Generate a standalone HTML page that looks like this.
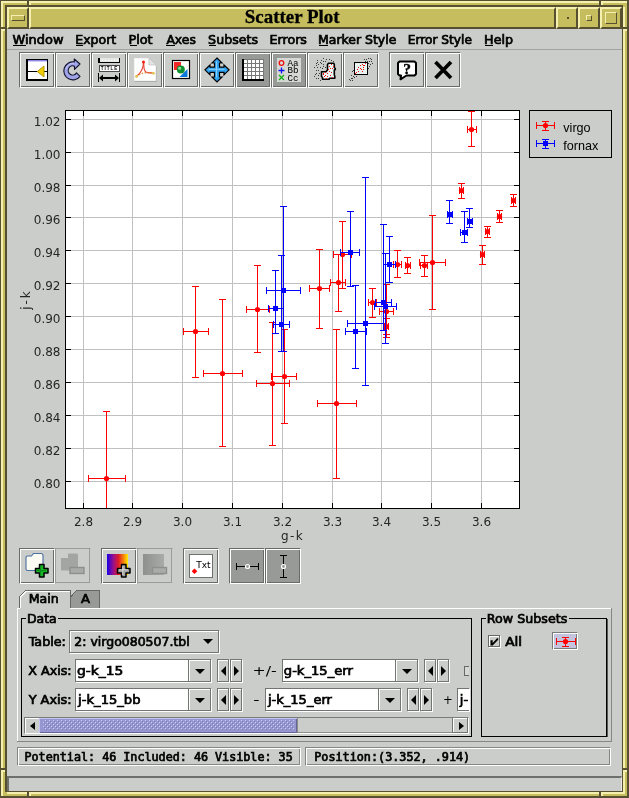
<!DOCTYPE html>
<html><head><meta charset="utf-8"><title>Scatter Plot</title>
<style>
html,body{margin:0;padding:0}
body{width:629px;height:798px;overflow:hidden;background:#cbcdca;position:relative;font-family:"DejaVu Sans","Liberation Sans",sans-serif;font-size:11px;color:#000}
.abs,.tb,.mi,.fr,.lbl,.fld,.cb,.nb{position:absolute}
svg{display:block}
svg,.tb{will-change:transform}
.fr{box-sizing:border-box}
/* motif frame pieces */
.kh{background:#c6be5e}
.raised{box-sizing:border-box;background:#c6be5e;border:2px solid;border-color:#f6f0b0 #565030 #565030 #f6f0b0}
.mi{top:33px;font-weight:bold;font-size:11.3px;line-height:14px;white-space:nowrap;letter-spacing:-0.1px}
.mi u{text-decoration:none;border-bottom:1px solid #000;padding-bottom:0}
.tb{width:36px;height:36px;box-sizing:border-box;border:1px solid #696b68;border-right-color:#fff;border-bottom-color:#fff;box-shadow:inset 1px 1px 0 #fff, inset -1px -1px 0 #696b68;}
.tb svg{position:absolute;left:-1px;top:-1px}
.tb.sel{background:#989a97}
.tb.sel::after{content:"";position:absolute;left:0;top:0;right:1px;bottom:1px;border:1px solid #fff;border-right:none;border-bottom:none;display:none}
.tb.dis{border-color:#9a9c99;box-shadow:inset -1px -1px 0 #9a9c99;border-right-color:#cbcdca;border-bottom-color:#cbcdca}
.lbl{font-weight:bold;font-size:11.3px;white-space:nowrap;line-height:14px}
.fld{box-sizing:border-box;height:23px;background:#fff;border:1px solid #737572;box-shadow:1px 1px 0 #fff;font-weight:bold;font-size:11.3px;line-height:21px;padding-left:4px;white-space:nowrap;overflow:hidden}
.cb{box-sizing:border-box;height:23px;background:#cbcdca;border:1px solid #737572;box-shadow:inset 1px 1px 0 #fff, 1px 1px 0 #fff}
.tri{position:absolute;width:0;height:0;border-left:5px solid transparent;border-right:5px solid transparent;border-top:5px solid #000}
.nb{box-sizing:border-box;height:23px;width:12px;background:#cbcdca;border:1px solid #737572;box-shadow:inset 1px 1px 0 #fff, 1px 1px 0 #fff}
.tl{position:absolute;left:3px;top:6px;width:0;height:0;border-top:5px solid transparent;border-bottom:5px solid transparent;border-right:5px solid #000}
.tr{position:absolute;left:3px;top:6px;width:0;height:0;border-top:5px solid transparent;border-bottom:5px solid transparent;border-left:5px solid #000}
.st{position:absolute;box-sizing:border-box;top:747px;height:19px;border:1px solid #858784;border-right-color:#fff;border-bottom-color:#fff;box-shadow:inset 1px 1px 0 #fff, inset -1px -1px 0 #858784;font-family:"DejaVu Sans Mono","Liberation Mono",monospace;font-weight:bold;font-size:11.63px;line-height:16px;white-space:pre;padding-left:8px;padding-top:1px}
</style></head><body>
<!-- window frame -->
<div class="abs kh" style="left:0;top:0;width:629px;height:7px"></div>
<div class="abs kh" style="left:0;top:791px;width:629px;height:7px"></div>
<div class="abs kh" style="left:0;top:0;width:7px;height:798px"></div>
<div class="abs kh" style="left:622px;top:0;width:7px;height:798px"></div>
<svg class="abs" style="left:0;top:0" width="629" height="798" shape-rendering="crispEdges">
<path d="M0.5 798V0.5H629" stroke="#565030" fill="none"/>
<path d="M2 796V2H627" stroke="#f6f0b0" stroke-width="2" fill="none"/>
<path d="M628 1V797H1" stroke="#565030" stroke-width="2" fill="none"/>
<path d="M6 791V6H622" stroke="#565030" stroke-width="2" fill="none"/>
<path d="M622.5 5V791.5H5" stroke="#565030" stroke-width="1" fill="none"/>
<path d="M624 7V793H7" stroke="#f6f0b0" stroke-width="2" fill="none"/>
<path d="M28 1V7M600 1V7M28 792V798M600 792V798M1 28H7M623 28H629M1 769H7M623 769H629" stroke="#565030" stroke-width="2"/>
<path d="M30 1V5M602 1V5M30 792V796M602 792V796M1 30H5M623 30H627M1 771H5M623 771H627" stroke="#f6f0b0" stroke-width="2"/>
</svg>
<!-- title bar -->
<div class="abs raised" style="left:7px;top:7px;width:22px;height:22px"><div class="abs raised" style="left:2px;top:6px;width:14px;height:6px;border-width:1px"></div></div>
<div class="abs raised" style="left:29px;top:7px;width:527px;height:22px"></div>
<div class="abs raised" style="left:556px;top:7px;width:22px;height:22px"><div class="abs" style="left:9px;top:8px;width:2px;height:2px;background:#565030"></div></div>
<div class="abs raised" style="left:578px;top:7px;width:22px;height:22px"><div class="abs raised" style="left:6px;top:6px;width:6px;height:6px;border-width:1px"></div></div>
<div class="abs raised" style="left:600px;top:7px;width:22px;height:22px"><div class="abs raised" style="left:3px;top:3px;width:12px;height:12px;border-width:1px"></div></div>
<!-- menu bar -->

<div class="abs" style="left:7px;top:49px;width:615px;height:1px;background:#a2a4a1"></div>
<!-- toolbar -->
<div class="tb " style="left:19px;top:52px"><svg width="36" height="36" viewBox="0 0 36 36" shape-rendering="crispEdges"><rect x="7" y="7" width="22" height="22" fill="#000"/><rect x="9" y="8" width="19" height="19" fill="#fff"/><rect x="9" y="8" width="19" height="1.4" fill="#8a86e4" shape-rendering="auto"/><rect x="9" y="19" width="19" height="1" fill="#000"/><path d="M18.3 19.5L25 14v11Z" fill="#f0d000" stroke="#b89600" stroke-width="1" shape-rendering="auto"/></svg></div><div class="tb " style="left:55px;top:52px"><svg width="36" height="36" viewBox="0 0 36 36"><path d="M19.3 10A9 9 0 1 0 25 24.3L21.5 20.9A4.5 4.6 0 1 1 19.5 14.2V17.4L25 12 19.2 7z" fill="#a0a4e6" stroke="#10102c" stroke-width="1.1" stroke-linejoin="round"/><path d="M19 11.2A7.8 7.8 0 0 0 11 17" fill="none" stroke="#c4c8f6" stroke-width="1"/></svg></div><div class="tb " style="left:91px;top:52px"><svg width="36" height="36" viewBox="0 0 36 36"><g shape-rendering="crispEdges"><rect x="9" y="6" width="19" height="4" fill="#e6e8e5"/><rect x="7" y="6" width="2" height="5" fill="#000"/><rect x="7" y="9.5" width="22" height="1.5" fill="#000"/><rect x="28" y="6" width="1" height="5" fill="#000"/><path d="M11.5 8v2M14.5 8v2M17.5 8v2M20.5 8v2M23.5 8v2M26.5 8v2" stroke="#fff" stroke-width="1" stroke-dasharray="1 1"/><rect x="8.5" y="13.5" width="20" height="6" fill="#fff" stroke="#4a4a4a"/><path d="M7.5 21v9M28.5 21v9" stroke="#000" stroke-width="1"/><rect x="10" y="25" width="16" height="2" fill="#000"/></g><text x="18.5" y="18.4" font-family="'Liberation Sans','DejaVu Sans',sans-serif" font-weight="bold" font-size="4.6" fill="#000" text-anchor="middle" letter-spacing="0.9">TITLE</text><path d="M8 26l4-3.5v7zM28 26l-4-3.5v7z" fill="#000"/></svg></div><div class="tb " style="left:127px;top:52px"><svg width="36" height="36" viewBox="0 0 36 36"><path d="M7.5 7h15l7 7v16h-22z" fill="#9c9e9b"/><path d="M7 6h15l7 7v16H7z" fill="#fff" stroke="#d4d4d4" stroke-width="0.6"/><path d="M22 6v7h7z" fill="#e4e4e4" stroke="#bdbdbd" stroke-width="0.7"/><path d="M16.5 10c.8 4-.5 8 2.5 10 2.3 1.2 5 .7 7.5 1.3" fill="none" stroke="#e44030" stroke-width="1.15"/><path d="M16.5 10c0 5-2 10.5-7 14.5" fill="none" stroke="#e44030" stroke-width="1.15"/><path d="M9.5 24.5c4-3.5 9-4.5 17-3.2" fill="none" stroke="#e88a30" stroke-width="1.2" stroke-dasharray="1.5 1.5"/><circle cx="16.5" cy="10" r="1.5" fill="#f02010"/><circle cx="9.5" cy="24.5" r="1.4" fill="#e0c850"/><circle cx="26.5" cy="21.3" r="1.4" fill="#e0c850"/></svg></div><div class="tb " style="left:163px;top:52px"><svg width="36" height="36" viewBox="0 0 36 36"><rect x="9.5" y="8.5" width="17" height="18" fill="#fff" stroke="#000" stroke-width="1.2"/><rect x="11" y="10" width="7" height="8" fill="#f02828"/><path d="M24.5 17v8h-8z" fill="#0a78d8"/><circle cx="17.8" cy="17.5" r="4" fill="#109030"/><circle cx="16.6" cy="16.2" r="1.5" fill="#8fe0a0"/></svg></div><div class="tb " style="left:199px;top:52px"><svg width="36" height="36" viewBox="0 0 36 36"><path d="M18 6l5 5h-2.5v4.2H25V13l5 4.8-5 5v-2.5h-4.5V25H23l-5 5-5-5h2.5v-4.7H11v2.5l-5-5L11 13v2.2h4.5V11H13z" fill="#30a4f2" stroke="#000" stroke-width="1.2" stroke-linejoin="miter"/><path d="M17.5 9.5v16M9.5 17.3h16" stroke="#8cd0fa" stroke-width="1"/></svg></div><div class="tb sel" style="left:235px;top:52px"><svg width="36" height="36" viewBox="0 0 36 36" shape-rendering="crispEdges"><rect x="7" y="7" width="22" height="22" fill="#787878"/><rect x="7" y="7" width="2" height="22" fill="#000"/><rect x="7" y="27" width="22" height="2" fill="#000"/><rect x="9" y="8" width="3" height="3" fill="#fff"/><rect x="9" y="12" width="3" height="3" fill="#fff"/><rect x="9" y="16" width="3" height="3" fill="#fff"/><rect x="9" y="20" width="3" height="3" fill="#fff"/><rect x="9" y="24" width="3" height="3" fill="#fff"/><rect x="13" y="8" width="3" height="3" fill="#fff"/><rect x="13" y="12" width="3" height="3" fill="#fff"/><rect x="13" y="16" width="3" height="3" fill="#fff"/><rect x="13" y="20" width="3" height="3" fill="#fff"/><rect x="13" y="24" width="3" height="3" fill="#fff"/><rect x="17" y="8" width="3" height="3" fill="#fff"/><rect x="17" y="12" width="3" height="3" fill="#fff"/><rect x="17" y="16" width="3" height="3" fill="#fff"/><rect x="17" y="20" width="3" height="3" fill="#fff"/><rect x="17" y="24" width="3" height="3" fill="#fff"/><rect x="21" y="8" width="3" height="3" fill="#fff"/><rect x="21" y="12" width="3" height="3" fill="#fff"/><rect x="21" y="16" width="3" height="3" fill="#fff"/><rect x="21" y="20" width="3" height="3" fill="#fff"/><rect x="21" y="24" width="3" height="3" fill="#fff"/><rect x="25" y="8" width="3" height="3" fill="#fff"/><rect x="25" y="12" width="3" height="3" fill="#fff"/><rect x="25" y="16" width="3" height="3" fill="#fff"/><rect x="25" y="20" width="3" height="3" fill="#fff"/><rect x="25" y="24" width="3" height="3" fill="#fff"/></svg></div><div class="tb sel" style="left:271px;top:52px"><svg width="36" height="36" viewBox="0 0 36 36"><rect x="6" y="6" width="24" height="24" fill="#d6d8d5"/><circle cx="10.5" cy="11" r="2.3" fill="none" stroke="#f01010" stroke-width="1.3"/><path d="M10.5 15.5v6M7.5 18.5h6" stroke="#1010f0" stroke-width="1.3"/><path d="M8 23l5 5M13 23l-5 5" stroke="#10b010" stroke-width="1.2"/><g font-family="'Liberation Mono','DejaVu Sans Mono',monospace" font-size="9" fill="#000"><text x="16.5" y="14" textLength="11" lengthAdjust="spacingAndGlyphs">Aa</text><text x="16.5" y="21.3" textLength="11" lengthAdjust="spacingAndGlyphs">Bb</text><text x="16.5" y="28.6" textLength="11" lengthAdjust="spacingAndGlyphs">Cc</text></g></svg></div><div class="tb " style="left:307px;top:52px"><svg width="36" height="36" viewBox="0 0 36 36" shape-rendering="crispEdges"><rect x="16" y="6" width="1" height="1" fill="#3a3a3a"/><rect x="19" y="7" width="1" height="1" fill="#3a3a3a"/><rect x="22" y="7" width="1" height="1" fill="#3a3a3a"/><rect x="24" y="8" width="1" height="1" fill="#3a3a3a"/><rect x="26" y="9" width="1" height="1" fill="#3a3a3a"/><rect x="10" y="8" width="1" height="1" fill="#3a3a3a"/><rect x="14" y="8" width="1" height="1" fill="#3a3a3a"/><rect x="16" y="9" width="1" height="1" fill="#3a3a3a"/><rect x="18" y="9" width="1" height="1" fill="#3a3a3a"/><rect x="10" y="10" width="1" height="1" fill="#3a3a3a"/><rect x="13" y="10" width="1" height="1" fill="#3a3a3a"/><rect x="9" y="11" width="1" height="1" fill="#3a3a3a"/><rect x="11" y="12" width="1" height="1" fill="#3a3a3a"/><rect x="14" y="11" width="1" height="1" fill="#3a3a3a"/><rect x="16" y="12" width="1" height="1" fill="#3a3a3a"/><rect x="9" y="13" width="1" height="1" fill="#3a3a3a"/><rect x="7" y="15" width="1" height="1" fill="#3a3a3a"/><rect x="10" y="15" width="1" height="1" fill="#3a3a3a"/><rect x="13" y="15" width="1" height="1" fill="#3a3a3a"/><rect x="16" y="14" width="1" height="1" fill="#3a3a3a"/><rect x="18" y="15" width="1" height="1" fill="#3a3a3a"/><rect x="15" y="16" width="1" height="1" fill="#3a3a3a"/><rect x="9" y="18" width="1" height="1" fill="#3a3a3a"/><rect x="11" y="18" width="1" height="1" fill="#3a3a3a"/><rect x="9" y="21" width="1" height="1" fill="#3a3a3a"/><rect x="8" y="22" width="1" height="1" fill="#3a3a3a"/><rect x="12" y="21" width="1" height="1" fill="#3a3a3a"/><rect x="11" y="23" width="1" height="1" fill="#3a3a3a"/><rect x="7" y="24" width="1" height="1" fill="#3a3a3a"/><rect x="9" y="26" width="1" height="1" fill="#3a3a3a"/><rect x="11" y="26" width="1" height="1" fill="#3a3a3a"/><rect x="13" y="28" width="1" height="1" fill="#3a3a3a"/><path d="M20.5 12.5l1-1.2h5l.8 1v3.2l1 1v1l-1 .5v5l.5 1v2.3h-5.3l-.5 1h-6.5v-1.8l-1-1v-4.7h4.5l1.5-1.8z" fill="#eaf6f4" stroke="#000" stroke-width="1.6" stroke-linejoin="round" shape-rendering="auto"/><rect x="24" y="12" width="1" height="1" fill="#f01010"/><rect x="22" y="14" width="1" height="1" fill="#f01010"/><rect x="26" y="14" width="1" height="1" fill="#f01010"/><rect x="23" y="16" width="1" height="1" fill="#f01010"/><rect x="25" y="16" width="1" height="1" fill="#f01010"/><rect x="21" y="17" width="1" height="1" fill="#f01010"/><rect x="22" y="19" width="1" height="1" fill="#f01010"/><rect x="24" y="20" width="1" height="1" fill="#f01010"/><rect x="18" y="20" width="1" height="1" fill="#f01010"/><rect x="20" y="21" width="1" height="1" fill="#f01010"/><rect x="16" y="21" width="1" height="1" fill="#f01010"/><rect x="16" y="22" width="1" height="1" fill="#f01010"/><rect x="18" y="23" width="1" height="1" fill="#f01010"/><rect x="23" y="23" width="1" height="1" fill="#f01010"/><rect x="17" y="24" width="1" height="1" fill="#f01010"/><rect x="20" y="24" width="1" height="1" fill="#f01010"/><rect x="25" y="25" width="1" height="1" fill="#f01010"/><rect x="19" y="26" width="1" height="1" fill="#f01010"/></svg></div><div class="tb " style="left:343px;top:52px"><svg width="36" height="36" viewBox="0 0 36 36" shape-rendering="crispEdges"><rect x="21" y="7" width="1" height="1" fill="#3a3a3a"/><rect x="23" y="7" width="1" height="1" fill="#3a3a3a"/><rect x="25" y="6" width="1" height="1" fill="#3a3a3a"/><rect x="27" y="6" width="1" height="1" fill="#3a3a3a"/><rect x="28" y="7" width="1" height="1" fill="#3a3a3a"/><rect x="22" y="9" width="1" height="1" fill="#3a3a3a"/><rect x="24" y="9" width="1" height="1" fill="#3a3a3a"/><rect x="26" y="9" width="1" height="1" fill="#3a3a3a"/><rect x="28" y="9" width="1" height="1" fill="#3a3a3a"/><rect x="29" y="11" width="1" height="1" fill="#3a3a3a"/><rect x="27" y="12" width="1" height="1" fill="#3a3a3a"/><rect x="25" y="11" width="1" height="1" fill="#3a3a3a"/><rect x="26" y="14" width="1" height="1" fill="#3a3a3a"/><rect x="25" y="16" width="1" height="1" fill="#3a3a3a"/><rect x="10" y="18" width="1" height="1" fill="#3a3a3a"/><rect x="9" y="19" width="1" height="1" fill="#3a3a3a"/><rect x="8" y="23" width="1" height="1" fill="#3a3a3a"/><rect x="10" y="24" width="1" height="1" fill="#3a3a3a"/><rect x="13" y="24" width="1" height="1" fill="#3a3a3a"/><rect x="11" y="25" width="1" height="1" fill="#3a3a3a"/><rect x="8" y="26" width="1" height="1" fill="#3a3a3a"/><rect x="9" y="26" width="1" height="1" fill="#3a3a3a"/><rect x="6" y="27" width="1" height="1" fill="#3a3a3a"/><rect x="7" y="28" width="1" height="1" fill="#3a3a3a"/><rect x="9" y="28" width="1" height="1" fill="#3a3a3a"/><rect x="11" y="10" width="14" height="13" fill="#000"/><rect x="12" y="11" width="12" height="11" fill="#e4f2f0"/><rect x="13" y="12" width="1" height="1" fill="#fff"/><rect x="15" y="12" width="1" height="1" fill="#fff"/><rect x="17" y="12" width="1" height="1" fill="#fff"/><rect x="19" y="12" width="1" height="1" fill="#fff"/><rect x="21" y="12" width="1" height="1" fill="#fff"/><rect x="23" y="12" width="1" height="1" fill="#fff"/><rect x="13" y="21" width="1" height="1" fill="#fff"/><rect x="15" y="21" width="1" height="1" fill="#fff"/><rect x="17" y="21" width="1" height="1" fill="#fff"/><rect x="19" y="21" width="1" height="1" fill="#fff"/><rect x="21" y="21" width="1" height="1" fill="#fff"/><rect x="23" y="21" width="1" height="1" fill="#fff"/><rect x="12" y="13" width="1" height="1" fill="#fff"/><rect x="12" y="15" width="1" height="1" fill="#fff"/><rect x="12" y="17" width="1" height="1" fill="#fff"/><rect x="12" y="19" width="1" height="1" fill="#fff"/><rect x="23" y="13" width="1" height="1" fill="#fff"/><rect x="23" y="15" width="1" height="1" fill="#fff"/><rect x="23" y="17" width="1" height="1" fill="#fff"/><rect x="23" y="19" width="1" height="1" fill="#fff"/><rect x="22" y="11" width="1" height="1" fill="#f01010"/><rect x="19" y="12" width="1" height="1" fill="#f01010"/><rect x="17" y="13" width="1" height="1" fill="#f01010"/><rect x="20" y="13" width="1" height="1" fill="#f01010"/><rect x="21" y="13" width="1" height="1" fill="#f01010"/><rect x="15" y="15" width="1" height="1" fill="#f01010"/><rect x="20" y="15" width="1" height="1" fill="#f01010"/><rect x="17" y="16" width="1" height="1" fill="#f01010"/><rect x="14" y="17" width="1" height="1" fill="#f01010"/><rect x="18" y="17" width="1" height="1" fill="#f01010"/><rect x="20" y="17" width="1" height="1" fill="#f01010"/><rect x="15" y="19" width="1" height="1" fill="#f01010"/><rect x="19" y="19" width="1" height="1" fill="#f01010"/><rect x="13" y="20" width="1" height="1" fill="#f01010"/><rect x="12" y="21" width="1" height="1" fill="#f01010"/></svg></div><div class="tb " style="left:389px;top:52px"><svg width="36" height="36" viewBox="0 0 36 36"><path d="M10.5 9.5h15l1.5 1.5v11l-1.5 1.5h-8l-6 3.8.5-3.8h-1.5l-1.5-1.5v-11z" fill="#fff" stroke="#000" stroke-width="2" stroke-linejoin="round"/><text x="18" y="21.5" font-family="'Liberation Serif','DejaVu Serif',serif" font-weight="bold" font-size="15.5" text-anchor="middle" fill="#000" stroke="#000" stroke-width="0.4">?</text></svg></div><div class="tb " style="left:425px;top:52px"><svg width="36" height="36" viewBox="0 0 36 36"><path d="M10.5 10l15.5 16M26 10l-15.5 16" stroke="#000" stroke-width="3.7"/></svg></div>
<svg class="abs" style="left:0;top:95px" width="629" height="450" viewBox="0 95 629 450">
<rect x="65.5" y="110.5" width="454" height="398" fill="#fff" stroke="#000" stroke-width="1" shape-rendering="crispEdges"/>
<path d="M83.5 111V508M132.5 111V508M182.5 111V508M232.5 111V508M282.5 111V508M332.5 111V508M381.5 111V508M431.5 111V508M481.5 111V508M66 119.5H519M66 152.5H519M66 185.5H519M66 217.5H519M66 250.5H519M66 283.5H519M66 316.5H519M66 349.5H519M66 382.5H519M66 415.5H519M66 448.5H519M66 481.5H519" stroke="#c0c0c0" stroke-width="1" shape-rendering="crispEdges"/>
<path d="M83.5 111V116M83.5 503V508M132.5 111V116M132.5 503V508M182.5 111V116M182.5 503V508M232.5 111V116M232.5 503V508M282.5 111V116M282.5 503V508M332.5 111V116M332.5 503V508M381.5 111V116M381.5 503V508M431.5 111V116M431.5 503V508M481.5 111V116M481.5 503V508M66 119.5H71M514 119.5H519M66 152.5H71M514 152.5H519M66 185.5H71M514 185.5H519M66 217.5H71M514 217.5H519M66 250.5H71M514 250.5H519M66 283.5H71M514 283.5H519M66 316.5H71M514 316.5H519M66 349.5H71M514 349.5H519M66 382.5H71M514 382.5H519M66 415.5H71M514 415.5H519M66 448.5H71M514 448.5H519M66 481.5H71M514 481.5H519" stroke="#000" stroke-width="1" shape-rendering="crispEdges"/>
<clipPath id="pc"><rect x="66" y="111" width="453" height="397"/></clipPath>
<g clip-path="url(#pc)">
<path d="M88.5 478.5H125.5M88.5 475V482M125.5 475V482M106.5 411.5V520.5M103 411.5H110M103 520.5H110M183.5 331.5H208.5M183.5 328V335M208.5 328V335M195.5 286.5V377.5M192 286.5H199M192 377.5H199M203.5 373.5H242.5M203.5 370V377M242.5 370V377M222.5 299.5V446.5M219 299.5H226M219 446.5H226M246.5 309.5H269.5M246.5 306V313M269.5 306V313M257.5 265.5V352.5M254 265.5H261M254 352.5H261M256.5 383.5H289.5M256.5 380V387M289.5 380V387M272.5 322.5V445.5M269 322.5H276M269 445.5H276M271.5 376.5H296.5M271.5 373V380M296.5 373V380M284.5 329.5V423.5M281 329.5H288M281 423.5H288M309.5 288.5H329.5M309.5 285V292M329.5 285V292M319.5 249.5V328.5M316 249.5H323M316 328.5H323M317.5 403.5H356.5M317.5 400V407M356.5 400V407M336.5 329.5V478.5M333 329.5H340M333 478.5H340M330.5 282.5H345.5M330.5 279V286M345.5 279V286M338.5 254.5V311.5M335 254.5H342M335 311.5H342M333.5 254.5H351.5M333.5 251V258M351.5 251V258M342.5 221.5V288.5M339 221.5H346M339 288.5H346M368.5 302.5H376.5M368.5 299V306M376.5 299V306M372.5 288.5V317.5M369 288.5H376M369 317.5H376M379.5 311.5H393.5M379.5 308V315M393.5 308V315M386.5 284.5V337.5M383 284.5H390M383 337.5H390M384.5 326.5H388.5M384.5 323V330M388.5 323V330M386.5 318.5V334.5M383 318.5H390M383 334.5H390M393.5 264.5H401.5M393.5 261V268M401.5 261V268M397.5 250.5V277.5M394 250.5H401M394 277.5H401M405.5 265.5H410.5M405.5 262V269M410.5 262V269M407.5 257.5V273.5M404 257.5H411M404 273.5H411M420.5 265.5H427.5M420.5 262V269M427.5 262V269M424.5 255.5V276.5M421 255.5H428M421 276.5H428M419.5 262.5H445.5M419.5 259V266M445.5 259V266M432.5 215.5V309.5M429 215.5H436M429 309.5H436M459.5 190.5H463.5M459.5 187V194M463.5 187V194M461.5 183.5V198.5M458 183.5H465M458 198.5H465M467.5 129.5H476.5M467.5 126V133M476.5 126V133M471.5 111.5V146.5M468 111.5H475M468 146.5H475M480.5 254.5H484.5M480.5 251V258M484.5 251V258M482.5 245.5V264.5M479 245.5H486M479 264.5H486M485.5 231.5H489.5M485.5 228V235M489.5 228V235M487.5 226.5V237.5M484 226.5H491M484 237.5H491M497.5 216.5H501.5M497.5 213V220M501.5 213V220M499.5 210.5V222.5M496 210.5H503M496 222.5H503M511.5 200.5H515.5M511.5 197V204M515.5 197V204M513.5 194.5V206.5M510 194.5H517M510 206.5H517" stroke="#ff0000" stroke-width="1" fill="none" shape-rendering="crispEdges"/>
<circle cx="106.5" cy="478.5" r="2.6" fill="#ff0000"/>
<circle cx="195.5" cy="331.5" r="2.6" fill="#ff0000"/>
<circle cx="222.5" cy="373.5" r="2.6" fill="#ff0000"/>
<circle cx="257.5" cy="309.5" r="2.6" fill="#ff0000"/>
<circle cx="272.5" cy="383.5" r="2.6" fill="#ff0000"/>
<circle cx="284.5" cy="376.5" r="2.6" fill="#ff0000"/>
<circle cx="319.5" cy="288.5" r="2.6" fill="#ff0000"/>
<circle cx="336.5" cy="403.5" r="2.6" fill="#ff0000"/>
<circle cx="338.5" cy="282.5" r="2.6" fill="#ff0000"/>
<circle cx="342.5" cy="254.5" r="2.6" fill="#ff0000"/>
<circle cx="372.5" cy="302.5" r="2.6" fill="#ff0000"/>
<circle cx="386.5" cy="311.5" r="2.6" fill="#ff0000"/>
<circle cx="386.5" cy="326.5" r="2.6" fill="#ff0000"/>
<circle cx="397.5" cy="264.5" r="2.6" fill="#ff0000"/>
<circle cx="407.5" cy="265.5" r="2.6" fill="#ff0000"/>
<circle cx="424.5" cy="265.5" r="2.6" fill="#ff0000"/>
<circle cx="432.5" cy="262.5" r="2.6" fill="#ff0000"/>
<circle cx="461.5" cy="190.5" r="2.6" fill="#ff0000"/>
<circle cx="471.5" cy="129.5" r="2.6" fill="#ff0000"/>
<circle cx="482.5" cy="254.5" r="2.6" fill="#ff0000"/>
<circle cx="487.5" cy="231.5" r="2.6" fill="#ff0000"/>
<circle cx="499.5" cy="216.5" r="2.6" fill="#ff0000"/>
<circle cx="513.5" cy="200.5" r="2.6" fill="#ff0000"/>
<path d="M268.5 308.5H283.5M268.5 305V312M283.5 305V312M275.5 270.5V333.5M272 270.5H279M272 333.5H279M273.5 324.5H289.5M273.5 321V328M289.5 321V328M281.5 255.5V351.5M278 255.5H285M278 351.5H285M266.5 290.5H300.5M266.5 287V294M300.5 287V294M283.5 206.5V351.5M280 206.5H287M280 351.5H287M340.5 252.5H359.5M340.5 249V256M359.5 249V256M350.5 211.5V286.5M347 211.5H354M347 286.5H354M345.5 331.5H366.5M345.5 328V335M366.5 328V335M355.5 285.5V368.5M352 285.5H359M352 368.5H359M347.5 323.5H383.5M347.5 320V327M383.5 320V327M365.5 177.5V385.5M362 177.5H369M362 385.5H369M375.5 302.5H391.5M375.5 299V306M391.5 299V306M383.5 224.5V330.5M380 224.5H387M380 330.5H387M374.5 306.5H396.5M374.5 303V310M396.5 303V310M385.5 253.5V343.5M382 253.5H389M382 343.5H389M383.5 264.5H395.5M383.5 261V268M395.5 261V268M389.5 236.5V282.5M386 236.5H393M386 282.5H393M447.5 214.5H452.5M447.5 211V218M452.5 211V218M449.5 200.5V223.5M446 200.5H453M446 223.5H453M460.5 232.5H467.5M460.5 229V236M467.5 229V236M464.5 211.5V242.5M461 211.5H468M461 242.5H468M467.5 221.5H472.5M467.5 218V225M472.5 218V225M469.5 208.5V227.5M466 208.5H473M466 227.5H473" stroke="#0000ff" stroke-width="1" fill="none" shape-rendering="crispEdges"/>
<rect x="273" y="306" width="5" height="5" fill="#0000ff"/>
<rect x="279" y="322" width="5" height="5" fill="#0000ff"/>
<rect x="281" y="288" width="5" height="5" fill="#0000ff"/>
<rect x="348" y="250" width="5" height="5" fill="#0000ff"/>
<rect x="353" y="329" width="5" height="5" fill="#0000ff"/>
<rect x="363" y="321" width="5" height="5" fill="#0000ff"/>
<rect x="381" y="300" width="5" height="5" fill="#0000ff"/>
<rect x="383" y="304" width="5" height="5" fill="#0000ff"/>
<rect x="387" y="262" width="5" height="5" fill="#0000ff"/>
<rect x="447" y="212" width="5" height="5" fill="#0000ff"/>
<rect x="462" y="230" width="5" height="5" fill="#0000ff"/>
<rect x="467" y="219" width="5" height="5" fill="#0000ff"/>
</g>
<g font-family="'DejaVu Sans','Liberation Sans',sans-serif" font-size="12" fill="#262626">
<text x="60.5" y="126" text-anchor="end">1.02</text>
<text x="60.5" y="159" text-anchor="end">1.00</text>
<text x="60.5" y="192" text-anchor="end">0.98</text>
<text x="60.5" y="224" text-anchor="end">0.96</text>
<text x="60.5" y="257" text-anchor="end">0.94</text>
<text x="60.5" y="290" text-anchor="end">0.92</text>
<text x="60.5" y="323" text-anchor="end">0.90</text>
<text x="60.5" y="356" text-anchor="end">0.88</text>
<text x="60.5" y="389" text-anchor="end">0.86</text>
<text x="60.5" y="422" text-anchor="end">0.84</text>
<text x="60.5" y="455" text-anchor="end">0.82</text>
<text x="60.5" y="488" text-anchor="end">0.80</text>
<text x="83.5" y="526" text-anchor="middle">2.8</text>
<text x="132.5" y="526" text-anchor="middle">2.9</text>
<text x="182.5" y="526" text-anchor="middle">3.0</text>
<text x="232.5" y="526" text-anchor="middle">3.1</text>
<text x="282.5" y="526" text-anchor="middle">3.2</text>
<text x="332.5" y="526" text-anchor="middle">3.3</text>
<text x="381.5" y="526" text-anchor="middle">3.4</text>
<text x="431.5" y="526" text-anchor="middle">3.5</text>
<text x="481.5" y="526" text-anchor="middle">3.6</text>
<text x="281" y="540" letter-spacing="1.4">g-k</text>
<text transform="translate(29.5,309.8) rotate(-90)" letter-spacing="2">j-k</text>
</g>
<rect x="529.5" y="110.5" width="82" height="47" fill="none" stroke="#000" shape-rendering="crispEdges"/>
<path d="M536.5 125.5H554.5M536.5 122V129M554.5 122V129M545.5 121.5V130.5M542 121.5H549M542 130.5H549" stroke="#f00" shape-rendering="crispEdges"/><circle cx="545.5" cy="125.5" r="2.6" fill="#f00"/>
<path d="M536.5 143.5H554.5M536.5 140V147M554.5 140V147M545.5 139.5V148.5M542 139.5H549M542 148.5H549" stroke="#00f" shape-rendering="crispEdges"/><rect x="543" y="141" width="5" height="5" fill="#00f"/>
<g font-family="'Liberation Sans','DejaVu Sans',sans-serif" font-size="12.6" fill="#000"><text x="563.3" y="131.5">virgo</text><text x="563.3" y="149.5">fornax</text></g>
</svg>
<div class="tb " style="left:19px;top:548px"><svg width="36" height="36" viewBox="0 0 36 36"><path d="M7 9.5q0-1.5 1.5-1.5h4l2-2.5h7.5q2 0 2 2v13.5q0 1.5-1.5 1.5h-14q-1.5 0-1.5-1.5z" fill="#fbfbf3" stroke="#4a70a0" stroke-width="1.1"/><path d="M20.5 16.5h4.5v4h4v4.5h-4v4h-4.5v-4h-4v-4.5h4z" fill="#18b828" stroke="#000" stroke-width="1.5" stroke-linejoin="round"/><path d="M21.5 18v9M18 22.7h9" stroke="#0c8c18" stroke-width="1.2"/></svg></div><div class="tb dis" style="left:55px;top:548px"><svg width="36" height="36" viewBox="0 0 36 36"><path d="M6 10h7v-3.5q0-1 1-1h7.5q1.5 0 1.5 1.5v15.5h-17z" fill="#a3a5a2"/><rect x="15" y="19.5" width="14" height="6" fill="#a9aba8" stroke="#8e908d" stroke-width="1.4"/></svg></div><div class="tb " style="left:101px;top:548px"><svg width="36" height="36" viewBox="0 0 36 36"><defs><linearGradient id="ag" x1="0" x2="1" y1="0" y2="0"><stop offset="0" stop-color="#1a00e8"/><stop offset="0.3" stop-color="#98108c"/><stop offset="0.55" stop-color="#e01c28"/><stop offset="0.8" stop-color="#f88a08"/><stop offset="1" stop-color="#ffee00"/></linearGradient></defs><rect x="6" y="6" width="21" height="21" fill="url(#ag)"/><path d="M20.5 16.5h4.5v4h4v4.5h-4v4h-4.5v-4h-4v-4.5h4z" fill="#a4a6a3" stroke="#000" stroke-width="1.5" stroke-linejoin="round"/><path d="M21.8 18v9M18 21.8h9" stroke="#d8d8d8" stroke-width="1"/></svg></div><div class="tb dis" style="left:137px;top:548px"><svg width="36" height="36" viewBox="0 0 36 36"><defs><linearGradient id="gg" x1="0" x2="1" y1="0" y2="0"><stop offset="0" stop-color="#8e908d"/><stop offset="1" stop-color="#a9aba8"/></linearGradient></defs><rect x="6" y="6" width="21" height="21" fill="url(#gg)"/><rect x="15.5" y="19.5" width="14" height="6" fill="#a9aba8" stroke="#8e908d" stroke-width="1.4"/></svg></div><div class="tb " style="left:183px;top:548px"><svg width="36" height="36" viewBox="0 0 36 36"><rect x="6.5" y="6.5" width="23" height="23" fill="#fff" stroke="#6e706d" stroke-width="1"/><text x="13.2" y="19.8" font-family="'DejaVu Sans','Liberation Sans',sans-serif" font-size="9.2" fill="#000" textLength="14.4" lengthAdjust="spacingAndGlyphs">Txt</text><path d="M11.5 20.5l2.8 2.8-2.8 2.8-2.8-2.8z" fill="#f00"/></svg></div><div class="tb sel" style="left:229px;top:548px"><svg width="36" height="36" viewBox="0 0 36 36"><path d="M7.5 18.5h22M7.5 15v7M29.5 15v7" stroke="#000" stroke-width="1" shape-rendering="crispEdges"/><circle cx="18.5" cy="18.5" r="2" fill="#989a97" stroke="#fff" stroke-width="1.2"/></svg></div><div class="tb sel" style="left:265px;top:548px"><svg width="36" height="36" viewBox="0 0 36 36"><path d="M18.5 7.5v22M15 7.5h7M15 29.5h7" stroke="#000" stroke-width="1" shape-rendering="crispEdges"/><circle cx="18.5" cy="18.5" r="2" fill="#989a97" stroke="#fff" stroke-width="1.2"/></svg></div>
<!-- tabbed pane -->
<svg class="abs" style="left:0;top:585px" width="629" height="160" viewBox="0 585 629 160" shape-rendering="crispEdges">
<path d="M71 608V596.5L76.5 591H99.5V608Z" fill="#989a97"/>
<path d="M19.5 608V596.5L25.5 590.5H70.5V608" fill="none" stroke="#666866"/>
<path d="M20.5 608V597L26 591.5H70" fill="none" stroke="#fff"/>
<path d="M71 596.5L76.5 590.5H99.5V608" fill="none" stroke="#666866"/>
<path d="M17 608.5H20M70 608.5H611M17.5 608V741" fill="none" stroke="#fff"/>
<path d="M17 741.5H612M611.5 608V742" fill="none" stroke="#858784"/>
<!-- Data titled border -->
<path d="M26 618.5H21.5V736.5H471.5V618.5H58" fill="none" stroke="#000"/>
<!-- Row Subsets titled border -->
<path d="M486 618.5H481.5V736.5H606.5V618.5H569" fill="none" stroke="#000"/>
<path d="M607.5 619V737" fill="none" stroke="#555"/>
</svg>
<!-- Table row -->
<div class="cb" style="left:69px;top:630px;width:150px"><div class="tri" style="left:133px;top:8px"></div></div>
<!-- X row -->
<div class="fld" style="left:75px;top:659px;width:114px"></div>
<div class="cb" style="left:188px;top:659px;width:23px"><div class="tri" style="left:6px;top:9px"></div></div>
<div class="nb" style="left:217px;top:659px"><div class="tl"></div></div>
<div class="nb" style="left:230px;top:659px"><div class="tr"></div></div>
<div class="fld" style="left:282px;top:659px;width:114px"></div>
<div class="cb" style="left:395px;top:659px;width:23px"><div class="tri" style="left:6px;top:9px"></div></div>
<div class="nb" style="left:424px;top:659px"><div class="tl"></div></div>
<div class="nb" style="left:437px;top:659px"><div class="tr"></div></div>
<div class="abs" style="left:464px;top:666px;width:5px;height:10px;box-sizing:border-box;border:1px solid #666866;border-right:none;background:#d6d8d5"></div>
<!-- Y row -->
<div class="fld" style="left:75px;top:688px;width:114px"></div>
<div class="cb" style="left:188px;top:688px;width:23px"><div class="tri" style="left:6px;top:9px"></div></div>
<div class="nb" style="left:217px;top:688px"><div class="tl"></div></div>
<div class="nb" style="left:230px;top:688px"><div class="tr"></div></div>
<div class="fld" style="left:265px;top:688px;width:114px"></div>
<div class="cb" style="left:378px;top:688px;width:23px"><div class="tri" style="left:6px;top:9px"></div></div>
<div class="nb" style="left:407px;top:688px"><div class="tl"></div></div>
<div class="nb" style="left:420px;top:688px"><div class="tr"></div></div>
<div class="fld" style="left:457px;top:688px;width:12px;border-right:none;padding-left:3px"></div>
<!-- scrollbar -->
<div class="abs" style="left:24px;top:717px;width:445px;height:17px;box-sizing:border-box;border:1px solid #7a7c79;border-right-color:#fff;border-bottom-color:#fff;background:#cbcdca"></div>
<div class="abs" style="left:25px;top:718px;width:14px;height:15px;box-sizing:border-box;border:1px solid #fff;border-right:none;border-bottom:none"><div class="tl" style="left:4px;top:3px;border-top-width:4px;border-bottom-width:4px;border-right-width:5px"></div></div>
<div class="abs" style="left:452px;top:718px;width:16px;height:15px;box-sizing:border-box;border:1px solid #737572;border-top:none;box-shadow:inset 1px 1px 0 #fff"><div class="tr" style="left:6px;top:4px;border-top-width:4px;border-bottom-width:4px;border-left-width:5px"></div></div>
<svg class="abs" style="left:39px;top:718px" width="258" height="15"><defs><pattern id="dp" width="4" height="4" patternUnits="userSpaceOnUse"><rect width="4" height="4" fill="#9696d0"/><rect x="0" y="0" width="1" height="1" fill="#cfcfff"/><rect x="2" y="2" width="1" height="1" fill="#cfcfff"/><rect x="1" y="1" width="1" height="1" fill="#7c7cb0"/><rect x="3" y="3" width="1" height="1" fill="#7c7cb0"/></pattern></defs><rect width="258" height="15" fill="#9696d0"/><rect x="4" y="2" width="251" height="10" fill="url(#dp)"/><path d="M0.5 15V0.5H258" stroke="#c4c4f4" fill="none" shape-rendering="crispEdges"/><path d="M257.5 1V14.5H1" stroke="#666699" fill="none" shape-rendering="crispEdges"/></svg>
<div class="abs" style="left:297px;top:718px;width:155px;height:15px;box-sizing:border-box;border-left:1px solid #8a8c89;border-bottom:1px solid #8a8c89"></div>
<!-- Row subsets content -->
<div class="abs" style="left:488px;top:635px;width:12px;height:12px;box-sizing:border-box;border:1px solid #666866;box-shadow:inset 1px 1px 0 #fff, 1px 1px 0 #fff"></div>
<svg class="abs" style="left:488px;top:635.5px" width="12" height="12"><path d="M2.5 4.3h2.2v2.7L9 2.3h1.2v1.5L4.7 9.6H2.5z" fill="#000"/></svg>
<div class="abs" style="left:552px;top:632px;width:26px;height:18px;box-sizing:border-box;border:1px solid #7a7c79;border-right-color:#fff;border-bottom-color:#fff;box-shadow:inset 1px 1px 0 #fff, inset -1px -1px 0 #7a7c79;background:#c4c4de"></div>
<svg class="abs" style="left:552px;top:632px" width="26" height="18" shape-rendering="crispEdges"><path d="M4 9.5H24M4.5 6V13M23.5 6V13M13.5 5V15M10 5.5H17M10 14.5H17" stroke="#f00" fill="none"/><circle cx="13.5" cy="9.5" r="2.6" fill="#f00" shape-rendering="auto"/></svg>
<!-- status -->
<div class="st" style="left:17px;width:284px"></div>
<div class="st" style="left:305px;width:306px;padding-left:10px"></div>
<!-- bottom strip -->
<div class="abs" style="left:7px;top:776px;width:615px;height:15px;box-sizing:border-box;border-top:2px solid #6e706d;border-left:2px solid #6e706d;border-right:1px solid #e8e8e8"></div>

<svg class="abs" style="left:0;top:0" width="629" height="798" fill="#000"><text x="12.56" y="43.6" font-family="'DejaVu Sans','Liberation Sans',sans-serif" font-weight="normal" font-size="11.8" textLength="50.90" lengthAdjust="spacingAndGlyphs" stroke="#000" stroke-width="0.68">Window</text><rect x="13" y="45" width="13" height="1" fill="#000"/><text x="75.23" y="43.6" font-family="'DejaVu Sans','Liberation Sans',sans-serif" font-weight="normal" font-size="11.8" textLength="41.01" lengthAdjust="spacingAndGlyphs" stroke="#000" stroke-width="0.68">Export</text><rect x="76" y="45" width="7" height="1" fill="#000"/><text x="128.40" y="43.6" font-family="'DejaVu Sans','Liberation Sans',sans-serif" font-weight="normal" font-size="11.8" textLength="24.26" lengthAdjust="spacingAndGlyphs" stroke="#000" stroke-width="0.68">Plot</text><rect x="130" y="45" width="7" height="1" fill="#000"/><text x="166.40" y="43.6" font-family="'DejaVu Sans','Liberation Sans',sans-serif" font-weight="normal" font-size="11.8" textLength="29.43" lengthAdjust="spacingAndGlyphs" stroke="#000" stroke-width="0.68">Axes</text><rect x="166" y="45" width="9" height="1" fill="#000"/><text x="208.14" y="43.6" font-family="'DejaVu Sans','Liberation Sans',sans-serif" font-weight="normal" font-size="11.8" textLength="49.94" lengthAdjust="spacingAndGlyphs" stroke="#000" stroke-width="0.68">Subsets</text><rect x="209" y="45" width="7" height="1" fill="#000"/><text x="269.52" y="43.6" font-family="'DejaVu Sans','Liberation Sans',sans-serif" font-weight="normal" font-size="11.8" textLength="37.43" lengthAdjust="spacingAndGlyphs" stroke="#000" stroke-width="0.68">Errors</text><text x="318.04" y="43.6" font-family="'DejaVu Sans','Liberation Sans',sans-serif" font-weight="normal" font-size="11.8" textLength="78.27" lengthAdjust="spacingAndGlyphs" stroke="#000" stroke-width="0.68">Marker Style</text><rect x="319" y="45" width="9" height="1" fill="#000"/><text x="407.77" y="43.6" font-family="'DejaVu Sans','Liberation Sans',sans-serif" font-weight="normal" font-size="11.8" textLength="64.11" lengthAdjust="spacingAndGlyphs" stroke="#000" stroke-width="0.68">Error Style</text><text x="484.12" y="43.6" font-family="'DejaVu Sans','Liberation Sans',sans-serif" font-weight="normal" font-size="11.8" textLength="28.93" lengthAdjust="spacingAndGlyphs" stroke="#000" stroke-width="0.68">Help</text><rect x="485" y="45" width="8" height="1" fill="#000"/><text x="244.80" y="23" font-family="'Liberation Serif','DejaVu Serif',serif" font-weight="bold" font-size="19" textLength="94.83" lengthAdjust="spacingAndGlyphs" stroke="#000" stroke-width="0.3">Scatter Plot</text><text x="28.73" y="603.4" font-family="'DejaVu Sans','Liberation Sans',sans-serif" font-weight="normal" font-size="11.8" textLength="30.00" lengthAdjust="spacingAndGlyphs" stroke="#000" stroke-width="0.68">Main</text><text x="81.09" y="603.4" font-family="'DejaVu Sans','Liberation Sans',sans-serif" font-weight="normal" font-size="11.8" textLength="8.99" lengthAdjust="spacingAndGlyphs" stroke="#000" stroke-width="0.68">A</text><text x="26.94" y="622.6" font-family="'DejaVu Sans','Liberation Sans',sans-serif" font-weight="normal" font-size="11.8" textLength="29.80" lengthAdjust="spacingAndGlyphs" stroke="#000" stroke-width="0.68">Data</text><text x="486.82" y="623" font-family="'DejaVu Sans','Liberation Sans',sans-serif" font-weight="normal" font-size="11.8" textLength="80.45" lengthAdjust="spacingAndGlyphs" stroke="#000" stroke-width="0.68">Row Subsets</text><text x="28.70" y="646.2" font-family="'DejaVu Sans','Liberation Sans',sans-serif" font-weight="normal" font-size="11.8" textLength="37.20" lengthAdjust="spacingAndGlyphs" stroke="#000" stroke-width="0.68">Table:</text><text x="28.27" y="675.3" font-family="'DejaVu Sans','Liberation Sans',sans-serif" font-weight="normal" font-size="11.8" textLength="43.33" lengthAdjust="spacingAndGlyphs" stroke="#000" stroke-width="0.68">X Axis:</text><text x="28.70" y="704.2" font-family="'DejaVu Sans','Liberation Sans',sans-serif" font-weight="normal" font-size="11.8" textLength="42.94" lengthAdjust="spacingAndGlyphs" stroke="#000" stroke-width="0.68">Y Axis:</text><text x="505.28" y="645.7" font-family="'DejaVu Sans','Liberation Sans',sans-serif" font-weight="normal" font-size="11.8" textLength="16.90" lengthAdjust="spacingAndGlyphs" stroke="#000" stroke-width="0.68">All</text><text x="74.35" y="646.2" font-family="'DejaVu Sans','Liberation Sans',sans-serif" font-weight="normal" font-size="11.8" textLength="115.35" lengthAdjust="spacingAndGlyphs" stroke="#000" stroke-width="0.68">2: virgo080507.tbl</text><text x="77.00" y="675.3" font-family="'DejaVu Sans','Liberation Sans',sans-serif" font-weight="normal" font-size="11.8" textLength="46.37" lengthAdjust="spacingAndGlyphs" stroke="#000" stroke-width="0.68">g-k_15</text><text x="78.12" y="704.2" font-family="'DejaVu Sans','Liberation Sans',sans-serif" font-weight="normal" font-size="11.8" textLength="62.41" lengthAdjust="spacingAndGlyphs" stroke="#000" stroke-width="0.68">j-k_15_bb</text><text x="283.83" y="675.3" font-family="'DejaVu Sans','Liberation Sans',sans-serif" font-weight="normal" font-size="11.8" textLength="69.01" lengthAdjust="spacingAndGlyphs" stroke="#000" stroke-width="0.68">g-k_15_err</text><text x="267.92" y="704.2" font-family="'DejaVu Sans','Liberation Sans',sans-serif" font-weight="normal" font-size="11.8" textLength="64.01" lengthAdjust="spacingAndGlyphs" stroke="#000" stroke-width="0.68">j-k_15_err</text><text x="252.50" y="675.3" font-family="'DejaVu Sans','Liberation Sans',sans-serif" font-weight="normal" font-size="11.8" textLength="24.20" lengthAdjust="spacingAndGlyphs">+/-</text><text x="253.31" y="704.2" font-family="'DejaVu Sans','Liberation Sans',sans-serif" font-weight="normal" font-size="11.8" textLength="6.32" lengthAdjust="spacingAndGlyphs">-</text><text x="443.12" y="704.2" font-family="'DejaVu Sans','Liberation Sans',sans-serif" font-weight="normal" font-size="11.8" textLength="9.75" lengthAdjust="spacingAndGlyphs">+</text><clipPath id="jc"><rect x="458" y="689" width="11" height="21"/></clipPath><g clip-path="url(#jc)"><text x="459.82" y="704.2" font-family="'DejaVu Sans','Liberation Sans',sans-serif" font-weight="normal" font-size="11.8" textLength="64.01" lengthAdjust="spacingAndGlyphs" stroke="#000" stroke-width="0.68">j-k_15_err</text></g><text x="24.49" y="760.6" font-family="'DejaVu Sans Mono','Liberation Mono',monospace" font-weight="normal" font-size="11.6" textLength="268.23" lengthAdjust="spacingAndGlyphs" xml:space="preserve" stroke="#000" stroke-width="0.68">Potential: 46 Included: 46 Visible: 35</text><text x="314.28" y="760.6" font-family="'DejaVu Sans Mono','Liberation Mono',monospace" font-weight="normal" font-size="11.6" textLength="155.91" lengthAdjust="spacingAndGlyphs" xml:space="preserve" stroke="#000" stroke-width="0.68">Position:(3.352, .914)</text></svg>
</body></html>
